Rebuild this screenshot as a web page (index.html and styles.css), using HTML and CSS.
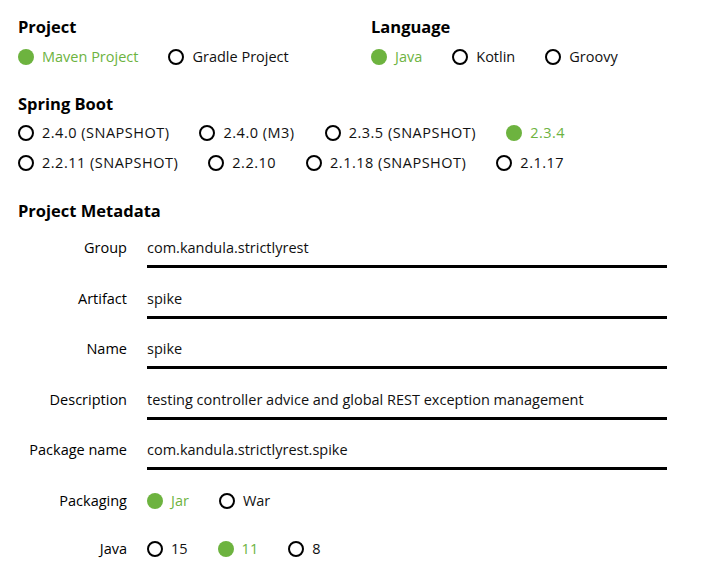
FILE: index.html
```html
<!DOCTYPE html>
<html>
<head>
<meta charset="utf-8">
<link rel="stylesheet" href="styles.css">
</head>
<body>
<div class="page">
  <div class="top">
    <div class="col">
      <div class="heading">Project</div>
      <div class="radios">
        <span class="radio checked"><i class="dot"></i>Maven Project</span>
        <span class="radio"><i class="dot"></i>Gradle Project</span>
      </div>
    </div>
    <div class="col">
      <div class="heading">Language</div>
      <div class="radios">
        <span class="radio checked"><i class="dot"></i>Java</span>
        <span class="radio"><i class="dot"></i>Kotlin</span>
        <span class="radio"><i class="dot"></i>Groovy</span>
      </div>
    </div>
  </div>

  <div class="section boot">
    <div class="heading">Spring Boot</div>
    <div class="radios wrap">
      <span class="radio"><i class="dot"></i>2.4.0 (SNAPSHOT)</span>
      <span class="radio"><i class="dot"></i>2.4.0 (M3)</span>
      <span class="radio"><i class="dot"></i>2.3.5 (SNAPSHOT)</span>
      <span class="radio checked"><i class="dot"></i>2.3.4</span>
      <span class="radio"><i class="dot"></i>2.2.11 (SNAPSHOT)</span>
      <span class="radio"><i class="dot"></i>2.2.10</span>
      <span class="radio"><i class="dot"></i>2.1.18 (SNAPSHOT)</span>
      <span class="radio"><i class="dot"></i>2.1.17</span>
    </div>
  </div>

  <div class="section meta">
    <div class="heading">Project Metadata</div>
    <div class="field">
      <div class="label">Group</div>
      <div class="input">com.kandula.strictlyrest</div>
    </div>
    <div class="field">
      <div class="label">Artifact</div>
      <div class="input">spike</div>
    </div>
    <div class="field">
      <div class="label">Name</div>
      <div class="input">spike</div>
    </div>
    <div class="field">
      <div class="label">Description</div>
      <div class="input">testing controller advice and global REST exception management</div>
    </div>
    <div class="field">
      <div class="label">Package name</div>
      <div class="input">com.kandula.strictlyrest.spike</div>
    </div>
    <div class="field opt first-opt">
      <div class="label">Packaging</div>
      <div class="radios">
        <span class="radio checked"><i class="dot"></i>Jar</span>
        <span class="radio"><i class="dot"></i>War</span>
      </div>
    </div>
    <div class="field opt">
      <div class="label">Java</div>
      <div class="radios">
        <span class="radio"><i class="dot"></i>15</span>
        <span class="radio checked"><i class="dot"></i>11</span>
        <span class="radio"><i class="dot"></i>8</span>
      </div>
    </div>
  </div>
</div>
</body>
</html>
```

FILE: styles.css
```css
html, body {
  margin: 0;
  padding: 0;
  background: #fff;
}
body {
  font-family: "Open Sans", "Liberation Sans", sans-serif;
  font-size: 14.5px;
  color: #111;
}
.page {
  padding: 17px 0 0 18px;
}
.top {
  display: flex;
}
.col {
  width: 353px;
  flex-shrink: 0;
}
.heading {
  font-weight: 700;
  font-size: 16.5px;
  line-height: 20px;
  height: 20px;
  color: #000;
}
.radios {
  display: flex;
  margin-top: 10px;
  line-height: 20px;
}
.radios.wrap {
  flex-wrap: wrap;
  width: 600px;
  row-gap: 10px;
  margin-top: 9px;
  letter-spacing: 0.5px;
}
.radio {
  display: flex;
  align-items: center;
  margin-right: 30px;
  white-space: nowrap;
}
.dot {
  display: block;
  box-sizing: border-box;
  width: 16px;
  height: 16px;
  border: 2px solid #000;
  border-radius: 50%;
  margin-right: 8px;
}
.radio.checked {
  color: #6db33f;
}
.radio.checked .dot {
  border: none;
  background: #6db33f;
}
.boot {
  margin-top: 27px;
}
.meta {
  margin-top: 28px;
}
.meta .heading {
  margin-bottom: 17px;
}
.field {
  display: flex;
  align-items: flex-start;
  line-height: 20px;
  margin-bottom: 20.5px;
}
.label {
  width: 109px;
  text-align: right;
  margin-right: 20px;
  color: #000;
}
.input {
  width: 520px;
  padding-bottom: 7px;
  border-bottom: 3px solid #000;
}
.field.opt .radios {
  margin-top: 0;
}
.first-opt {
  margin-top: 21px;
  margin-bottom: 28px;
}
```
